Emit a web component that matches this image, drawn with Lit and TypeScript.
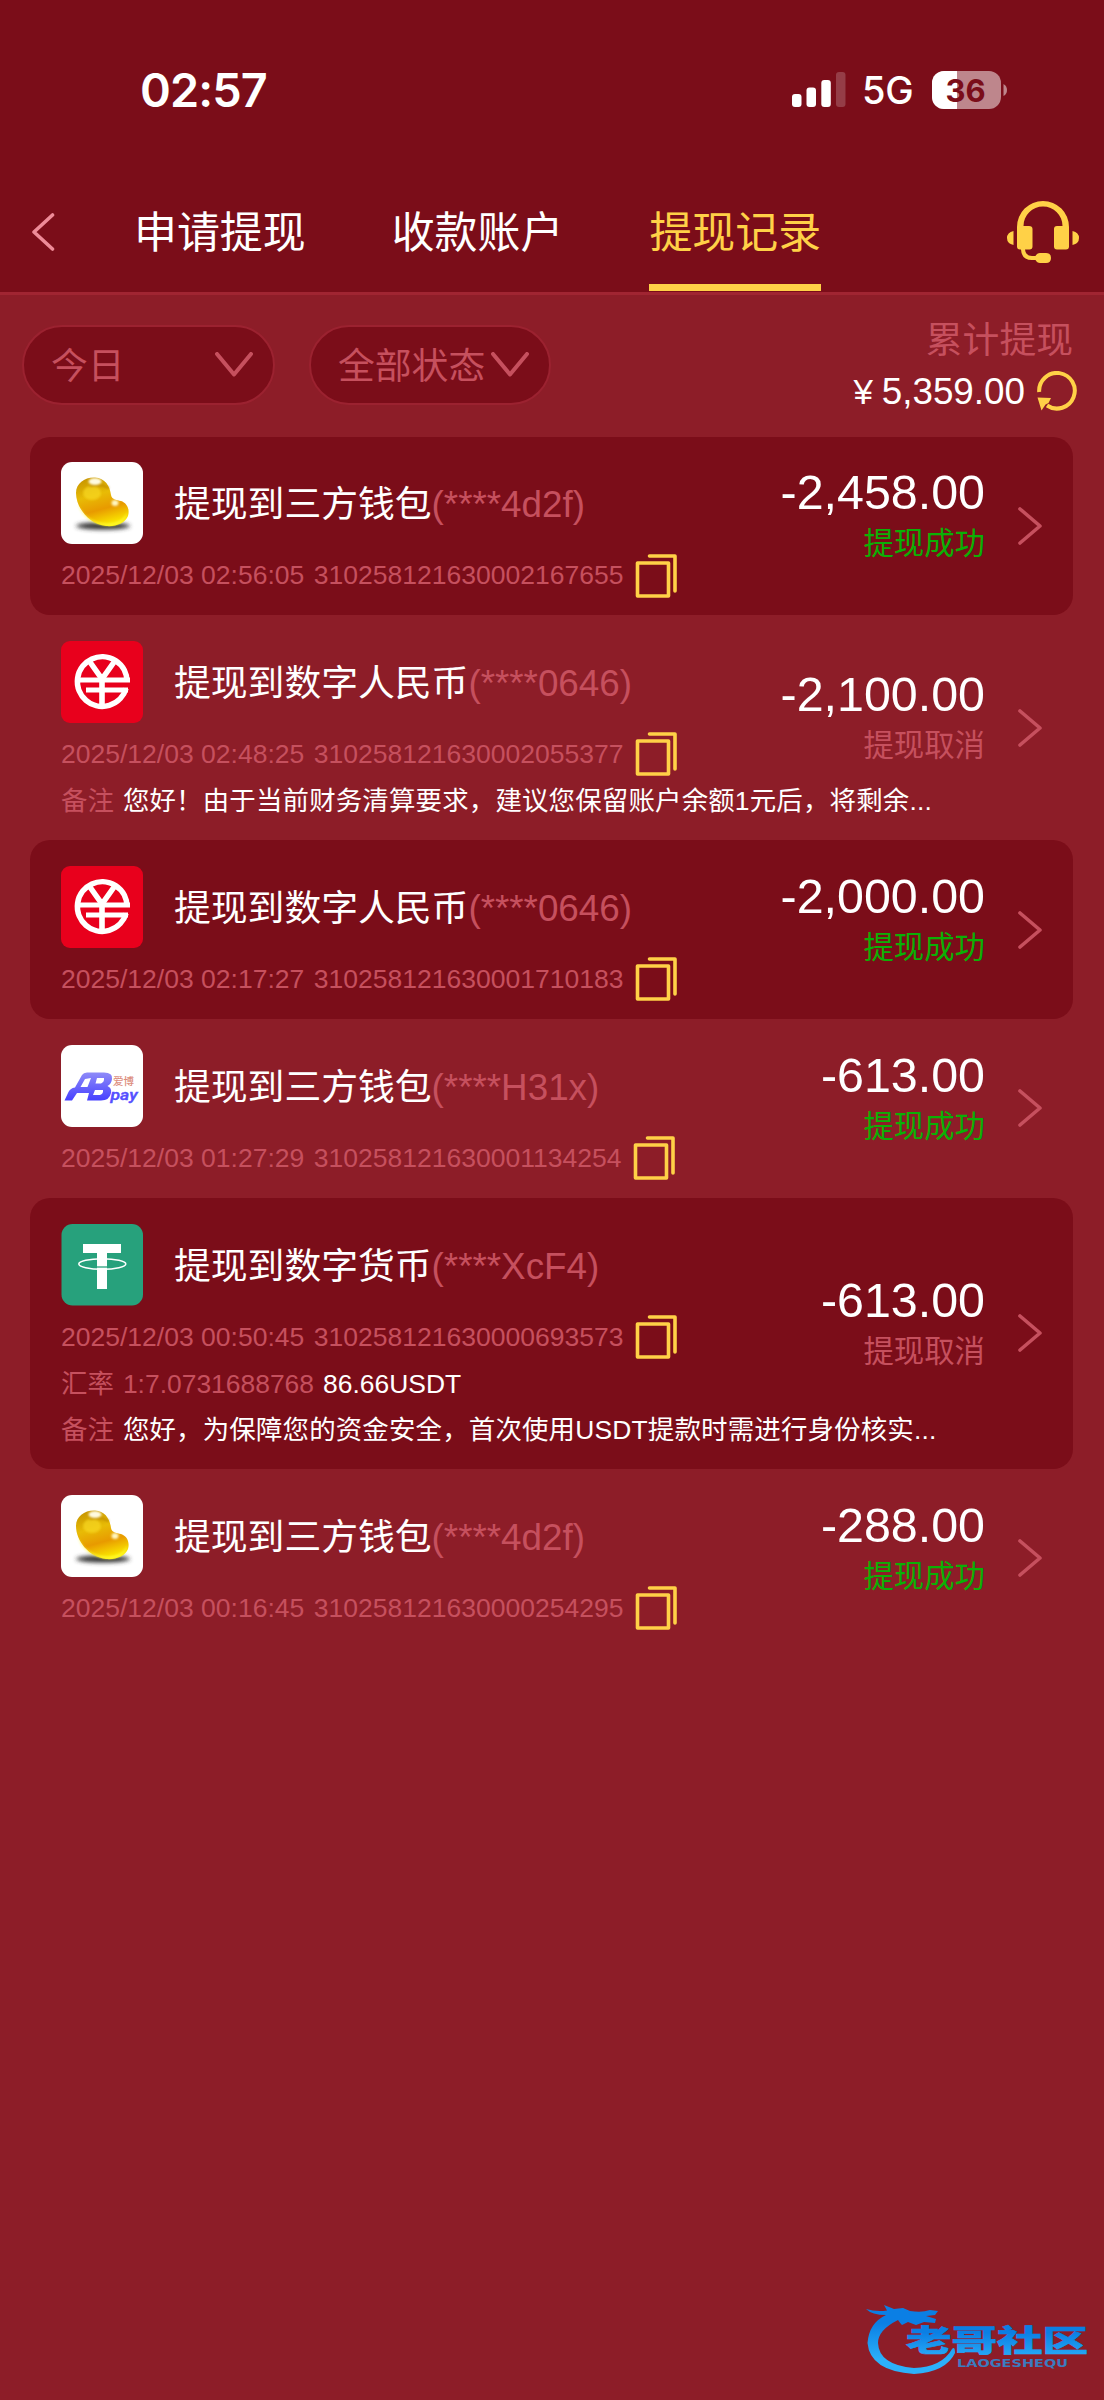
import { LitElement, html, css, svg, nothing } from "lit";
import { customElement, property } from "lit/decorators.js";

type Logo = "bean" | "ecny" | "abpay" | "usdt";

interface Entry {
  logo: Logo;
  title: string;
  account: string;
  time: string;
  order: string;
  amount: string;
  ok: boolean;
  rate?: string;
  usdt?: string;
  note?: string;
}

const ENTRIES: Entry[] = [
  { logo: "bean", title: "提现到三方钱包", account: "(****4d2f)", time: "2025/12/03 02:56:05", order: "310258121630002167655", amount: "-2,458.00", ok: true },
  { logo: "ecny", title: "提现到数字人民币", account: "(****0646)", time: "2025/12/03 02:48:25", order: "310258121630002055377", amount: "-2,100.00", ok: false, note: "您好！由于当前财务清算要求，建议您保留账户余额1元后，将剩余..." },
  { logo: "ecny", title: "提现到数字人民币", account: "(****0646)", time: "2025/12/03 02:17:27", order: "310258121630001710183", amount: "-2,000.00", ok: true },
  { logo: "abpay", title: "提现到三方钱包", account: "(****H31x)", time: "2025/12/03 01:27:29", order: "310258121630001134254", amount: "-613.00", ok: true },
  { logo: "usdt", title: "提现到数字货币", account: "(****XcF4)", time: "2025/12/03 00:50:45", order: "310258121630000693573", amount: "-613.00", ok: false, rate: "1:7.0731688768", usdt: "86.66USDT", note: "您好，为保障您的资金安全，首次使用USDT提款时需进行身份核实..." },
  { logo: "bean", title: "提现到三方钱包", account: "(****4d2f)", time: "2025/12/03 00:16:45", order: "310258121630000254295", amount: "-288.00", ok: true },
];

const LOGOS = {
  bean: svg`
    <defs>
      <linearGradient id="g" x1="0.3" y1="0" x2="0.6" y2="1">
        <stop offset="0" stop-color="#c99700"/><stop offset="0.35" stop-color="#e8bb06"/>
        <stop offset="0.65" stop-color="#e89a00"/><stop offset="1" stop-color="#fdf000"/>
      </linearGradient>
      <filter id="b" x="-20%" y="-100%" width="140%" height="300%"><feGaussianBlur stdDeviation="2"/></filter>
      <filter id="s" x="-50%" y="-50%" width="200%" height="200%"><feGaussianBlur stdDeviation="1"/></filter>
    </defs>
    <rect width="82" height="82" rx="11" fill="#fff"/>
    <ellipse cx="42" cy="64" rx="27" ry="3.500" fill="#333" filter="url(#b)"/>
    <path d="M15 31C15 21 24 15 34 15.500C44 16 49 24 50 33C51 38 56 38 60 39C66 41 69 47 67 54C64 61 55 65 45 64C28 62 15 46 15 31Z" fill="url(#g)"/>
    <path d="M17 42C23 56 34 61 46 61.500C56 61.500 64 57 66 50C66 57 60 64 47 64C32 63 20 54 17 42Z" fill="#fffb38" opacity=".8" filter="url(#s)"/>
    <ellipse cx="31" cy="31" rx="9" ry="7" fill="#f8d820" opacity=".7" filter="url(#s)"/>
    <path d="M29 24Q38 21 48 26" fill="none" stroke="#b57f00" stroke-width="2" opacity=".6" filter="url(#s)"/>
    <ellipse cx="34" cy="19.500" rx="6.500" ry="3.500" fill="#fffbe0" filter="url(#s)"/>
    <ellipse cx="54" cy="41" rx="3.500" ry="3" fill="#fff6c0" filter="url(#s)"/>`,
  ecny: svg`
    <rect width="82" height="82" rx="9" fill="#e8001c"/>
    <g fill="none" stroke="#fff" stroke-width="5.600">
      <path d="M66 40.500A24.800 24.800 0 1 0 65 47.500"/>
      <path d="M27.500 19L41 38L54.500 19M41 34V65"/>
      <path stroke-width="5" d="M15 39H69M25 49H67"/>
    </g>`,
  abpay: svg`
    <defs><linearGradient id="p" x1="0" y1="0" x2="0" y2="1"><stop offset="0" stop-color="#8f8bf8"/><stop offset="1" stop-color="#4640ff"/></linearGradient></defs>
    <rect width="82" height="82" rx="11" fill="#fff"/>
    <path fill="url(#p)" fill-rule="evenodd" d="M3.500 55.500L7 48Q9 43 14 42.500L21 30Q22.500 27.500 26 27.500H43Q52 27.500 51 34Q50.500 39 46.500 41Q51 43 50 48Q48.500 55.500 40 55.500H26L28 48H16L11 55.500ZM24 34L19.500 42H26.500L30 33ZM36 33L34.500 38.500H40Q43.500 37 43 33ZM34 45L32 50H39Q42.500 49 42 45Z"/>
    <text x="52" y="39.500" font-size="10.500" font-weight="500" fill="#dc8d7c" font-family="Noto Sans CJK SC, sans-serif">爱博</text>
    <text x="49.500" y="54.500" font-size="14.500" font-weight="500" font-style="italic" fill="#554fff" stroke="#554fff" stroke-width=".4" textLength="27" lengthAdjust="spacingAndGlyphs" font-family="Roboto, sans-serif">pay</text>`,
  usdt: svg`
    <rect x=".5" width="81.500" height="81.500" rx="11" fill="#27a17c"/>
    <path d="M22 20H60V29H46V65H36V29H22Z" fill="#fff"/>
    <ellipse cx="41.300" cy="40" rx="23.500" ry="5.200" fill="none" stroke="#fff" stroke-width="1.500"/>
    <path d="M36 43H46" stroke="#27a17c" stroke-width="1.300"/>`,
};

@customElement("record-row")
export class RecordRow extends LitElement {
  @property({ attribute: false }) entry!: Entry;

  static styles = css`
    :host { display: block; }
    .head { display: flex; align-items: center; gap: 31px; height: 82px; font-size: 36.800px; white-space: nowrap; color: #fff; }
    .logo { width: 82px; height: 82px; flex: none; }
    .title { padding-bottom: 4px; }
    .dim { color: #c6505e; }
    .meta { display: flex; align-items: center; height: 63px; font-size: 26.530px; white-space: nowrap; color: #c6505e; }
    .time { margin-right: 9.500px; }
    .copy { width: 42px; height: 44px; margin-left: 11.500px; }
  `;

  render() {
    const e = this.entry;
    return html`
      <div class="head"><svg class="logo" viewBox="0 0 82 82">${LOGOS[e.logo]}</svg><span class="title">${e.title}<span class="dim">${e.account}</span></span></div>
      <div class="meta"><span class="time">${e.time}</span><span>${e.order}</span>
        <svg class="copy" viewBox="0 0 42 44" fill="none" stroke="#ffd147" stroke-width="3.600" stroke-linejoin="round" stroke-linecap="round"><rect x="2.500" y="9" width="31" height="33"/><path d="M14.500 2H40V37"/></svg></div>`;
  }
}

@customElement("app-root")
export class AppRoot extends LitElement {
  static styles = css`
    :host { display: block; font-family: "Liberation Sans", "Noto Sans CJK SC", sans-serif; }
    .page { position: relative; display: flex; flex-direction: column; width: 1104px; height: 2400px; overflow: hidden; background: #8d1d28; color: #fff; }
    .top { height: 295px; box-sizing: border-box; background: #7b0d19; border-bottom: 3px solid #a02532; }
    .status { display: flex; height: 180px; padding: 0 96px 0 140px; align-items: center; font-family: Inter, sans-serif; }
    .clock { flex: 1; font-size: 46.800px; font-weight: 600; letter-spacing: -0.900px; }
    .signal { width: 54px; height: 36px; }
    .net { margin-left: 16px; width: 70px; font-size: 38px; font-weight: 500; letter-spacing: -0.300px; }
    .battery { width: 76px; height: 38px; font-weight: 700; }
    .nav { display: flex; height: 112px; padding: 0 25px 0 31px; align-items: center; }
    .back { width: 24px; height: 40px; margin-right: 79px; margin-top: -8px; }
    .tab { align-self: flex-start; height: 111px; box-sizing: border-box; margin-right: 86px; border-bottom: 7px solid transparent; font-size: 42.930px; line-height: 107px; white-space: nowrap; }
    .tab.on { color: #ffd147; border-color: #ffd147; }
    .service { width: 72px; height: 62px; margin-left: auto; margin-top: -9px; }
    .filters { display: flex; height: 141.500px; padding: 0 27px 0 22px; align-items: flex-start; box-sizing: border-box; font-size: 36.800px; color: #c6505e; }
    .pill { display: flex; align-items: center; justify-content: space-between; height: 80px; margin: 30px 34px 0 0; padding: 0 20px 0 27px; box-sizing: border-box; border: 2px solid #9b2230; border-radius: 40px; background: #7b0d19; white-space: nowrap; }
    .choice { padding-bottom: 5px; }
    .day { width: 253px; }
    .state { width: 242px; }
    .arrow { width: 38px; height: 25px; margin-top: -2px; }
    .sum { display: flex; flex-direction: column; margin-left: auto; align-items: flex-end; }
    .cap { margin: 21px 4px 0 0; line-height: 50px; height: 50px; }
    .total { display: flex; align-items: center; height: 50px; color: #fff; }
    .yen { width: 37px; text-align: center; font-size: 35px; padding-top: 2px; }
    .figure { padding-top: 1px; margin-right: 12px; }
    .refresh { width: 40px; height: 40px; }
    .list { display: flex; flex-direction: column; margin-left: 30px; width: 1043px; }
    .item { display: flex; align-items: center; height: 178.800px; box-sizing: border-box; border-radius: 20px; }
    .item.shade { background: #7b0d19; }
    .item.note { height: 225px; }
    .item.rate { height: 271px; }
    .left { flex: none; width: 655px; align-self: flex-start; padding: 25.700px 0 0 31px; box-sizing: border-box; }
    .lines { margin-top: -8px; }
    .line { display: flex; gap: 9px; height: 46px; line-height: 46px; font-size: 26.450px; white-space: nowrap; }
    .remark { letter-spacing: 0.170px; }
    .dim { color: #c6505e; }
    .right { display: flex; flex-direction: column; align-items: flex-end; width: 300px; margin-top: -21px; }
    .amount { font-size: 48.400px; line-height: 56px; }
    .result { font-size: 30.400px; line-height: 46px; color: #c6505e; }
    .result.ok { color: #0bb005; }
    .go { width: 24px; height: 38px; margin-left: 33px; }
    .mark { position: absolute; left: 860px; top: 2296px; width: 232px; height: 84px; }
  `;

  private item(e: Entry, index: number) {
    const kind = e.rate ? "rate" : e.note ? "note" : "";
    return html`<div class="item ${kind} ${index % 2 ? "" : "shade"}">
      <div class="left">
        <record-row .entry=${e}></record-row>
        <div class="lines">
          ${e.rate ? html`<div class="line"><span class="dim">汇率</span><span class="dim">${e.rate}</span><span>${e.usdt}</span></div>` : nothing}
          ${e.note ? html`<div class="line"><span class="dim">备注</span><span class="remark">${e.note}</span></div>` : nothing}
        </div>
      </div>
      <div class="right"><span class="amount">${e.amount}</span><span class="result ${e.ok ? "ok" : ""}">${e.ok ? "提现成功" : "提现取消"}</span></div>
      <svg class="go" viewBox="0 0 24 38" fill="none" stroke="#c6505e" stroke-width="3.600" stroke-linecap="round" stroke-linejoin="round"><path d="M2 2L22 19L2 36"/></svg>
    </div>`;
  }

  private arrow() {
    return html`<svg class="arrow" viewBox="0 0 38 25" fill="none" stroke="#c6505e" stroke-width="4" stroke-linecap="round" stroke-linejoin="round"><path d="M2 2L19 22.500L36 2"/></svg>`;
  }

  render() {
    return html`<div class="page">
      <header class="top">
        <div class="status">
          <span class="clock">02:57</span>
          <svg class="signal" viewBox="0 0 54 36" fill="#fff"><rect y="22" width="9.500" height="13" rx="3"/><rect x="14.500" y="15.500" width="9.500" height="19.500" rx="3"/><rect x="29.300" y="8" width="9.500" height="27" rx="3"/><rect x="44" y="0" width="9.500" height="35" rx="3" opacity=".2"/></svg>
          <span class="net">5G</span>
          <svg class="battery" viewBox="0 0 76 38">
            <clipPath id="c"><rect width="69" height="38" rx="12"/></clipPath>
            <g clip-path="url(#c)"><rect width="69" height="38" fill="#be868c"/><rect width="25" height="38" fill="#fff"/></g>
            <path d="M71.500 13Q75 15 75 19Q75 23 71.500 25Z" fill="#be868c"/>
            <text x="33.500" y="30.500" text-anchor="middle" font-size="31" fill="#7b0d19">36</text>
          </svg>
        </div>
        <nav class="nav">
          <svg class="back" viewBox="0 0 24 40" fill="none" stroke="#ee8b98" stroke-width="3.600" stroke-linecap="round" stroke-linejoin="round"><path d="M21.500 3L3 20L21.500 37"/></svg>
          <span class="tab">申请提现</span><span class="tab">收款账户</span><span class="tab on">提现记录</span>
          <svg class="service" viewBox="0 0 72 62" fill="#ffd147">
            <path d="M10 26A26 26 0 0 1 62 26V45.500Q62 48.500 59 48.500H50Q47 48.500 47 45.500V28Q47 25 50 25H55.500A19.500 19.500 0 0 0 16.500 25H22Q25.500 25 25.500 28V45.500Q25.500 48.500 22.500 48.500H18Q18.500 55 25 55H28.500Q30 52 33 52H39Q44 52 44 57Q44 62 39 62H33Q30 62 28.500 59H25Q14.500 59 14 48.500H13Q10 48.500 10 45.500Z"/>
            <path d="M6.500 30V44Q0 42.500 0 37Q0 31.500 6.500 30ZM65.500 30V44Q72 42.500 72 37Q72 31.500 65.500 30Z"/>
          </svg>
        </nav>
      </header>
      <section class="filters">
        <div class="pill day"><span class="choice">今日</span>${this.arrow()}</div>
        <div class="pill state"><span class="choice">全部状态</span>${this.arrow()}</div>
        <div class="sum"><div class="cap">累计提现</div>
          <div class="total"><span class="yen">¥</span><span class="figure">5,359.00</span><svg class="refresh" viewBox="0 0 40 40"><path d="M2.200 21A17.800 17.800 0 1 1 10 34.500" fill="none" stroke="#ffd147" stroke-width="4"/><path d="M0.500 26.500L14 27L11.500 32L8.500 33.500L4.500 39.500Z" fill="#ffd147"/></svg></div></div>
      </section>
      <main class="list">${ENTRIES.map((e, i) => this.item(e, i))}</main>
      <svg class="mark" viewBox="0 0 232 84">
        <defs><linearGradient id="m" x1="0" y1="10" x2="0" y2="78" gradientUnits="userSpaceOnUse"><stop offset=".25" stop-color="#0b7fe4"/><stop offset=".8" stop-color="#2cb1fa"/></linearGradient></defs>
        <g fill="url(#m)">
          <path d="M6 13Q16 16 27 14.500L24 9L34 13L43 12L50 15Q62 17 70 14L78 15L75 19L66 20L76 23L75 27L64 26L56 29L48 26L42 29Q40 27 38 24Q18 34 18 47Q19 69 54 72Q82 71 92 53Q95 50 95 57Q86 76 54 78Q10 75 7.500 47Q9 27 26 19Q12 19 6 13Z"/>
          <text x="46" y="52" font-size="39" font-weight="900" textLength="182" lengthAdjust="spacingAndGlyphs" font-family="Noto Sans CJK SC, sans-serif" transform="translate(0 16.500) scale(1 .75)" stroke="url(#m)" stroke-width=".8">老哥社区</text>
          <text x="97" y="70.500" font-size="11" font-weight="700" textLength="111" lengthAdjust="spacingAndGlyphs" fill="#3b7cc0" font-family="DejaVu Sans, sans-serif">LAOGESHEQU</text>
        </g>
      </svg>
    </div>`;
  }
}
